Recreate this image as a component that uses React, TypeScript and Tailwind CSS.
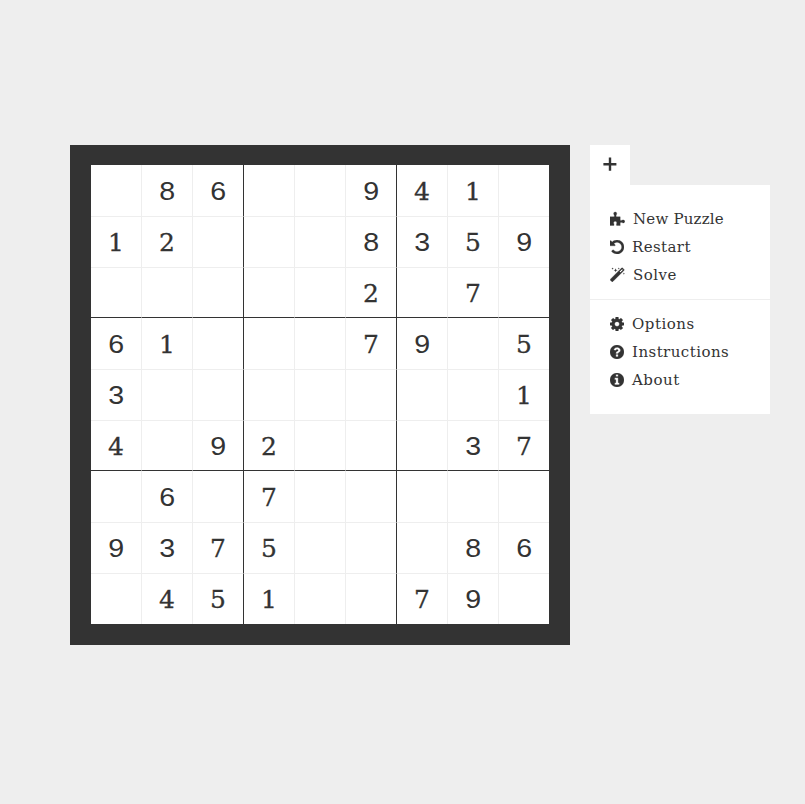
import React from "react";

const puzzle = [
  " 86  941 ",
  "12   8359",
  "     2 7 ",
  "61   79 5",
  "3       1",
  "4 92   37",
  " 6 7     ",
  "9375   86",
  " 451  79 ",
];

const DISC =
  "M1664 896q0 209-103 385.5t-279.5 279.5-385.5 103-385.5-103-279.5-279.5-103-385.5 103-385.5 279.5-279.5 385.5-103 385.5 103 279.5 279.5 103 385.5z";
const INFO =
  "M1152 1376v-160q0-14-9-23t-23-9h-96v-512q0-14-9-23t-23-9h-320q-14 0-23 9t-9 23v160q0 14 9 23t23 9h96v320h-96q-14 0-23 9t-9 23v160q0 14 9 23t23 9h448q14 0 23-9t9-23zm-128-896v-160q0-14-9-23t-23-9h-192q-14 0-23 9t-9 23v160q0 14 9 23t23 9h192q14 0 23-9t9-23z";
const QUESTION =
  "M1024 1376v-192q0-14-9-23t-23-9h-192q-14 0-23 9t-9 23v192q0 14 9 23t23 9h192q14 0 23-9t9-23zm256-672q0-88-55.5-163t-138.5-116-170-41q-243 0-371 213-15 24 8 42l132 100q7 6 19 6 16 0 25-12 53-68 86-92 34-24 86-24 48 0 85.5 26t37.5 59q0 38-20 61t-68 45q-63 28-115.5 86.5t-52.5 125.5v36q0 14 9 23t23 9h192q14 0 23-9t9-23q0-19 21.5-49.5t54.5-49.5q32-18 49-28.5t46-35 44.5-48 28-60.5 12.5-81z";
const UNDO =
  "M1664 896q0 156-61 298t-164 245-245 164-298 61q-172 0-327-72.5t-264-204.5q-7-10-6.5-22.5t8.5-20.5l137-138q10-9 25-9 16 2 23 12 73 95 179 147t225 52q104 0 198.5-40.5t163.5-109.5 109.5-163.5 40.5-198.5-40.5-198.5-109.5-163.5-163.5-109.5-198.5-40.5q-98 0-188 35.5t-160 101.5l137 138q31 30 14 69-17 40-59 40h-448q-26 0-45-19t-19-45v-448q0-42 40-59 39-17 69 14l130 129q107-101 244.5-156.5t284.5-55.5q156 0 298 61t245 164 164 245 61 298z";
const COG =
  "M1152 896q0-106-75-181t-181-75-181 75-75 181 75 181 181 75 181-75 75-181zm512-109v222q0 12-8 23t-20 13l-185 28q-19 54-39 91 35 50 107 138 10 12 10 25t-9 23q-27 37-99 108t-94 71q-12 0-26-9l-138-108q-44 23-91 38-16 136-29 186-7 28-36 28h-222q-14 0-24.5-8.5t-11.5-21.5l-28-184q-49-16-90-37l-141 107q-10 9-25 9-14 0-25-11-126-114-165-168-7-10-7-23 0-12 8-23 15-21 51-66.5t54-70.5q-27-50-41-99l-183-27q-13-2-21-12.5t-8-23.5v-222q0-12 8-23t19-13l186-28q14-46 39-92-40-57-107-138-10-12-10-24 0-10 9-23 26-36 98.5-107.5t94.5-71.5q13 0 26 10l138 107q44-23 91-38 16-136 29-186 7-28 36-28h222q14 0 24.5 8.5t11.5 21.5l28 184q49 16 90 37l142-107q9-9 24-9 13 0 25 10 129 119 165 170 7 8 7 22 0 12-8 23-15 21-51 66.5t-54 70.5q26 50 41 98l183 28q13 2 21 12.5t8 23.5z";

function Glyph({ d }: { d: string }) {
  return (
    <svg viewBox="128 128 1536 1536" className="h-3.5 w-3.5 shrink-0" fill="currentColor" stroke="currentColor" strokeWidth="30" fillRule="evenodd">
      <path d={d} />
    </svg>
  );
}

function PuzzleIcon() {
  return (
    <svg viewBox="0 0 15 15" className="mb-0.5 h-[15px] w-[15px] shrink-0" fill="currentColor" stroke="currentColor" strokeWidth="0.3">
      <path d="M0 5.8H4.2Q4.8 5 4 3.8C3.2 2.2 3.9 1 5.2 1S7.2 2.2 6.4 3.8Q5.7 5 6.3 5.8H10.2V9.2Q10.9 9.9 12 9.2C13.4 8.5 14.8 9.1 14.8 10.4S13.4 12.3 12 11.6Q10.9 11 10.2 11.7V14.6H6.7Q6.1 13.9 6.6 12.8C7.2 11.4 6.5 10.3 5.2 10.3S3.2 11.4 3.8 12.8Q4.3 13.9 3.8 14.6H0Z" />
    </svg>
  );
}

function WandIcon() {
  return (
    <svg viewBox="0 0 15 15" className="mb-px h-[15px] w-[15px] shrink-0" fill="currentColor">
      <path
        fillRule="evenodd"
        stroke="currentColor"
        strokeWidth="0.5"
        d="M.5 12.2 11.6 1.1Q12.1.6 12.6 1.1L13.9 2.4Q14.4 2.9 13.9 3.4L2.8 14.5Q2.3 15 1.8 14.5L.5 13.2Q0 12.7 .5 12.2ZM9.5 4.5 10.5 5.5 13.1 2.9 12.1 1.9Z"
      />
      <path d="M2.6.5 2.9 1.3 3.7 1.6 2.9 1.9 2.6 2.7 2.3 1.9 1.5 1.6 2.3 1.3ZM5.6 1.2 6.1 2.7 7.6 3.2 6.1 3.7 5.6 5.2 5.1 3.7 3.6 3.2 5.1 2.7ZM8.8.4 9.1 1.2 9.9 1.5 9.1 1.8 8.8 2.6 8.5 1.8 7.7 1.5 8.5 1.2ZM13.9 5.6 14.2 6.4 15 6.7 14.2 7 13.9 7.8 13.6 7 12.8 6.7 13.6 6.4Z" />
    </svg>
  );
}

const groups: { label: string; icon: React.ReactNode; text: string }[][] = [
  [
    { label: "New Puzzle", icon: <PuzzleIcon />, text: "tracking-[0.2px]" },
    { label: "Restart", icon: <Glyph d={UNDO} />, text: "tracking-[0.4px]" },
    { label: "Solve", icon: <WandIcon />, text: "tracking-[0.5px]" },
  ],
  [
    { label: "Options", icon: <Glyph d={COG} />, text: "tracking-[0.5px]" },
    { label: "Instructions", icon: <Glyph d={DISC + QUESTION} />, text: "tracking-[0.45px]" },
    { label: "About", icon: <Glyph d={DISC + INFO} />, text: "tracking-[0.5px]" },
  ],
];

function Cell({ value, row, col }: { value: string; row: number; col: number }) {
  const right = col === 8 ? "" : col % 3 === 2 ? "border-r border-r-[#333]" : "border-r border-r-[#eee]";
  const bottom = row === 8 ? "" : row % 3 === 2 ? "border-b border-b-[#333]" : "border-b border-b-[#eee]";
  const offset = row % 3 === 0 ? "pt-0.5" : "pt-px";
  const face = "3689".includes(value)
    ? "font-['Liberation_Sans',sans-serif] text-[26px] leading-[48px] scale-x-110"
    : "font-['DejaVu_Serif',serif] text-[25px] leading-[50px] [-webkit-text-stroke:0.3px_#333]";
  return (
    <div className={`flex items-start justify-center ${right} ${bottom} ${offset}`}>
      <span className={`h-[49px] ${face}`}>{value.trim()}</span>
    </div>
  );
}

export default function App() {
  return (
    <div className="flex h-[804px] w-[805px] items-start gap-5 bg-[#eee] pt-[145px] pl-[70px] text-[#333]">
      <main className="h-[500px] w-[500px] shrink-0 bg-[#333] pt-5 pl-[21px]">
        <div className="grid h-[459px] w-[458px] grid-cols-[repeat(8,51px)_50px] grid-rows-[52px_51px_50px_52px_51px_50px_52px_51px_50px] bg-white">
          {puzzle.flatMap((line, row) =>
            line.split("").map((value, col) => <Cell key={`${row}-${col}`} value={value} row={row} col={col} />),
          )}
        </div>
      </main>
      <aside className="w-[180px] shrink-0">
        <button className="flex h-10 w-10 items-start bg-white pt-3 pl-[13px]" aria-label="Menu">
          <svg viewBox="0 0 14 14" className="h-3.5 w-3.5" fill="currentColor">
            <path d="M5.8.5h2.4v5.5h5.2v2.4H8.2v5.4H5.8V8.4H.4V6h5.4z" />
          </svg>
        </button>
        <nav className="bg-white py-2.5 font-['DejaVu_Serif',serif] text-[15px]">
          {groups.map((items, index) => (
            <ul key={index} className={index === 0 ? "border-b border-[#eee] pt-2.5 pb-2.5" : "pt-2.5 pb-2.5"}>
              {items.map(({ label, icon, text }) => (
                <li key={label} className="flex h-7 items-center gap-2 pl-5">
                  {icon}
                  <span className={`pt-px whitespace-nowrap leading-[23px] ${text}`}>{label}</span>
                </li>
              ))}
            </ul>
          ))}
        </nav>
      </aside>
    </div>
  );
}
